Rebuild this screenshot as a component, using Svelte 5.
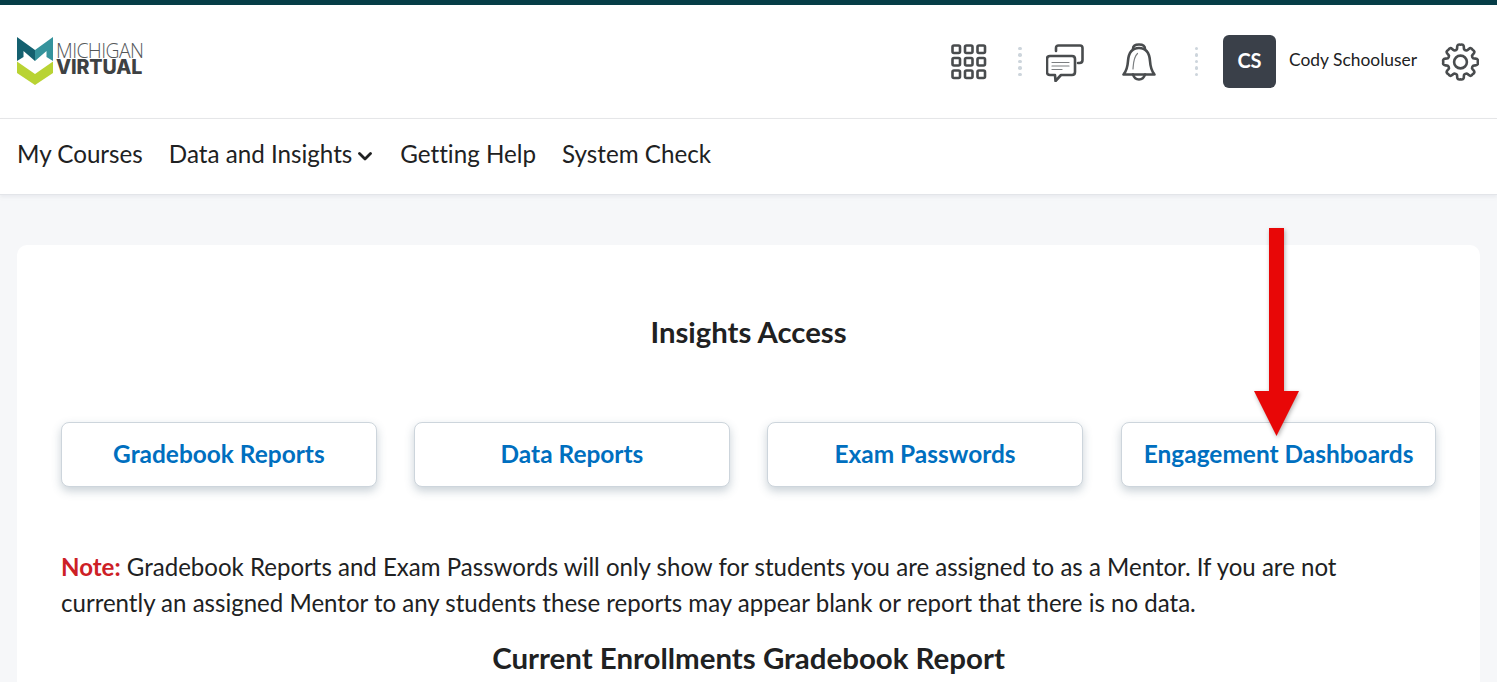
<script>
  const buttons = ['Gradebook Reports', 'Data Reports', 'Exam Passwords', 'Engagement Dashboards'];
  const navItems = ['My Courses', 'Data and Insights', 'Getting Help', 'System Check'];

  // Eight-toothed gear outline, centred on (19.5, 19)
  function gearPath() {
    const pt = (r, deg) => {
      const a = (deg * Math.PI) / 180;
      return `${(19.5 + r * Math.cos(a)).toFixed(2)} ${(19 + r * Math.sin(a)).toFixed(2)}`;
    };
    let d = '';
    for (let i = 0; i < 8; i++) {
      const c = i * 45 - 90;
      d += `${i ? 'L' : 'M'}${pt(13.2, c - 16)} `;
      d += `Q${pt(14.4, c - 13)} ${pt(15.5, c - 12.5)} `;
      d += `Q${pt(18.4, c - 10)} ${pt(17.2, c)} `;
      d += `Q${pt(18.4, c + 10)} ${pt(15.5, c + 12.5)} `;
      d += `Q${pt(14.4, c + 13)} ${pt(13.2, c + 16)} `;
      d += `Q${pt(12.4, c + 22.5)} ${pt(13.2, c + 29)} `;
    }
    return d + 'Z';
  }
  const gear = gearPath();
</script>

<div class="page">
  <div class="topline"></div>
  <header class="header">
    <div class="logo">
      <svg width="36" height="48" viewBox="0 0 36 48" aria-hidden="true">
        <polygon points="0,0 18,13 18,24 6.5,14 6.5,20 0,24" fill="#14606f" />
        <polygon points="36,0 18,13 18,24 29.5,14 29.5,20 36,24" fill="#35939c" />
        <polygon points="0,24.5 18,37 36,24.5 36,36 18,48 0,36" fill="#b9d333" />
      </svg>
      <div class="wordmark">
        <span class="michigan">MICHIGAN</span>
        <span class="virtual">VIRTUAL</span>
      </div>
    </div>
    <div class="tools">
      <svg class="grid-icon" width="36" height="36" viewBox="0 0 36 36" fill="none" stroke="#494c4e" stroke-width="2.6" aria-hidden="true">
        {#each [0, 12.5, 25] as y}
          {#each [0, 12.5, 25] as x}
            <rect x={x + 1.5} y={y + 1.5} width="7.5" height="7.5" rx="1.5" />
          {/each}
        {/each}
      </svg>
      <div class="dots"><i></i><i></i><i></i><i></i><i></i></div>
      <svg class="chat" width="38" height="38" viewBox="0 0 38 38" fill="none" stroke="#494c4e" stroke-width="2.6" stroke-linecap="round" stroke-linejoin="round" aria-hidden="true">
        <path d="M10 7 V4 Q10 1.5 12.5 1.5 H34 Q36.5 1.5 36.5 4 V16 Q36.5 19 33.5 19 H32" />
        <path d="M4 12 H26 Q29 12 29 15 V28 Q29 31 26 31 H15 L9.5 37 L9 31 H4 Q1 31 1 28 V15 Q1 12 4 12 Z" />
        <path d="M6 18.5 H23 M6 22 H23 M6 25.5 H16" stroke-width="1.2" stroke="#7b7e80" />
      </svg>
      <svg class="bell" width="34" height="38" viewBox="0 0 34 38" fill="none" stroke="#494c4e" stroke-width="2.6" stroke-linecap="round" stroke-linejoin="round" aria-hidden="true">
        <path d="M11 6 Q11 1.5 17 1.5 Q23 1.5 23 6" />
        <path d="M17 5 C9 5 6.5 11 6 18 C5.6 24 4.5 28 1.5 31.5 H32.5 C29.5 28 28.4 24 28 18 C27.5 11 25 5 17 5 Z" />
        <path d="M11 31.5 Q12.5 36.5 17 36.5 Q21.5 36.5 23 31.5" />
        <path d="M11 26 C11.5 20 11.5 14 15.5 10.5" stroke-width="1.2" stroke="#7b7e80" />
      </svg>
      <div class="dots second"><i></i><i></i><i></i><i></i><i></i></div>
      <div class="avatar">CS</div>
      <span class="username">Cody Schooluser</span>
      <svg class="gear" width="38" height="38" viewBox="0 0 38 38" fill="none" stroke="#494c4e" stroke-width="2.6" stroke-linejoin="round" aria-hidden="true">
        <path d={gear} />
        <circle cx="19.5" cy="19" r="6.4" />
      </svg>
    </div>
  </header>
  <nav class="nav">
    {#each navItems as item, i}
      <span class="nav-item">
        {item}
        {#if i === 1}
          <svg width="14" height="9" viewBox="0 0 14 9" fill="none" stroke="#202122" stroke-width="2.8" stroke-linecap="round" stroke-linejoin="round" aria-hidden="true">
            <path d="M1.5 1.5 L7 7 L12.5 1.5" />
          </svg>
        {/if}
      </span>
    {/each}
  </nav>
  <main class="main">
    <section class="card">
      <h1>Insights Access</h1>
      <div class="buttons">
        {#each buttons as label}
          <button type="button">{label}</button>
        {/each}
      </div>
      <p class="note">
        <strong>Note:</strong> Gradebook Reports and Exam Passwords will only show for students you are assigned to as a Mentor. If you are not currently an assigned Mentor to any students these reports may appear blank or report that there is no data.
      </p>
      <h2>Current Enrollments Gradebook Report</h2>
    </section>
  </main>
  <svg class="arrow" width="55" height="218" viewBox="0 0 55 218" aria-hidden="true">
    <polygon points="20,0 35,0 35,163 50,163 27.5,208 5,163 20,163" fill="#e80707" />
  </svg>
</div>

<style>
  :global(body) {
    margin: 0;
    background: #f6f7f9;
  }
  .page {
    position: relative;
    height: 682px;
    overflow: hidden;
    font-family: Lato, sans-serif;
    font-variant-ligatures: none;
    color: #202122;
    background: #f6f7f9;
  }
  .topline {
    height: 5px;
    background: #063d47;
  }
  .header {
    height: 114px;
    box-sizing: border-box;
    border-bottom: 1px solid #e6e6e8;
    background: #fff;
    display: flex;
    align-items: center;
    justify-content: space-between;
    padding: 0 17px;
  }
  .logo {
    display: flex;
    align-items: center;
    gap: 3px;
    margin-top: -2px;
  }
  .wordmark {
    display: flex;
    flex-direction: column;
    margin-top: -4px;
  }
  .michigan {
    font-family: "Open Sans", sans-serif;
    font-weight: 300;
    font-size: 19.4px;
    line-height: 17px;
    letter-spacing: -0.6px;
    color: #55585a;
  }
  .virtual {
    font-family: Inter, sans-serif;
    font-weight: 800;
    font-size: 19.6px;
    line-height: 17px;
    letter-spacing: -0.1px;
    color: #3e4143;
  }
  .tools {
    display: flex;
    align-items: center;
    margin-right: 1px;
  }
  .dots {
    display: flex;
    flex-direction: column;
    gap: 3px;
    margin: 0 24px 0 31px;
  }
  .dots.second {
    margin: 0 25px 0 39px;
  }
  .dots i {
    width: 3.5px;
    height: 3.5px;
    border-radius: 50%;
    background: #cdd5dc;
  }
  .grid-icon {
    display: block;
  }
  .chat {
    margin-top: 2px;
  }
  .bell {
    margin-left: 38px;
  }
  .avatar {
    width: 53px;
    height: 53px;
    box-sizing: border-box;
    padding-bottom: 3px;
    border-radius: 6px;
    background: #3a4049;
    color: #fff;
    font-weight: 700;
    font-size: 20px;
    display: flex;
    align-items: center;
    justify-content: center;
  }
  .username {
    font-size: 17.4px;
    margin-left: 13px;
    margin-bottom: 5px;
    color: #202122;
  }
  .gear {
    margin-left: 24px;
  }
  .nav {
    height: 76px;
    box-sizing: border-box;
    border-bottom: 1px solid #e3e5e9;
    background: #fff;
    display: flex;
    align-items: center;
    gap: 26px;
    padding: 0 17px 6px;
    font-size: 24.2px;
    box-shadow: 0 2px 3px rgba(210, 214, 220, 0.35);
  }
  .nav-item {
    display: inline-flex;
    align-items: center;
    gap: 6px;
  }
  .nav-item svg {
    margin-top: 5px;
    margin-right: 2px;
  }
  .main {
    padding: 50px 17px 0;
  }
  .card {
    background: #fff;
    border-radius: 10px;
    padding: 0 44px 60px;
    box-sizing: border-box;
  }
  h1 {
    margin: 0;
    padding-top: 69px;
    font-size: 29.3px;
    line-height: 36px;
    font-weight: 700;
    text-align: center;
  }
  .buttons {
    display: grid;
    grid-template-columns: repeat(4, 1fr);
    column-gap: 37.33px;
    margin-top: 72px;
  }
  button {
    height: 65px;
    background: #fff;
    border: 1px solid #cdd5dc;
    border-radius: 8px;
    box-shadow: 0 4px 10px rgba(60, 90, 110, 0.28);
    font-family: Lato, sans-serif;
    font-weight: 700;
    font-size: 24.45px;
    color: #006fbf;
    padding: 0 0 2px;
  }
  button:last-child {
    margin-left: 1px;
  }
  .note {
    margin: 62px 0 0;
    font-size: 24.05px;
    line-height: 35.7px;
    max-width: 1340px;
  }
  .note strong {
    color: #cd2026;
    font-weight: 700;
  }
  h2 {
    margin: 20px 0 0;
    font-size: 29.45px;
    line-height: 36px;
    font-weight: 700;
    text-align: center;
  }
  .arrow {
    position: absolute;
    left: 1249px;
    top: 228px;
    filter: drop-shadow(1px 2px 2px rgba(0, 0, 0, 0.3));
  }
</style>
